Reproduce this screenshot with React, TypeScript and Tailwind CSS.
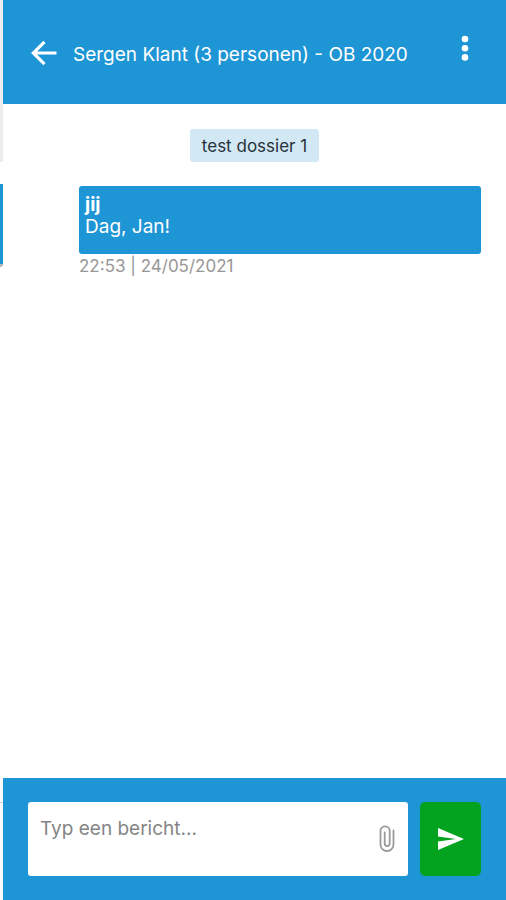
import { useState } from "react";

function BackIcon() {
  return (
    <svg viewBox="0 0 26 26" className="h-[26px] w-[26px]" fill="none" stroke="currentColor" strokeWidth="3.2" aria-hidden="true">
      <path d="M25.500 13H3M13.500 1.800L2.300 13l11.200 11.200" />
    </svg>
  );
}

function MoreIcon() {
  return (
    <svg viewBox="0 0 8 26" className="h-[26px] w-2" fill="currentColor" aria-hidden="true">
      <circle cx="4" cy="4" r="3.3" />
      <circle cx="4" cy="13.2" r="3.3" />
      <circle cx="4" cy="22.4" r="3.3" />
    </svg>
  );
}

function ClipIcon() {
  return (
    <svg viewBox="0 0 16 28" className="h-7 w-4" fill="none" stroke="currentColor" strokeWidth="1.8" strokeLinecap="round" aria-hidden="true">
      <path d="M14.500 5.500V19.500a6.500 6.500 0 0 1-13 0V6a4.600 4.600 0 0 1 9.200 0V18.500a2.500 2.500 0 0 1-5 0V7.500" />
    </svg>
  );
}

function SendIcon() {
  return (
    <svg viewBox="0 0 26 22" className="h-[22px] w-[26px]" fill="currentColor" aria-hidden="true">
      <path d="M0 0L26 11L0 22V13.500L18 11L0 8.500Z" />
    </svg>
  );
}

function SidebarEdge() {
  return (
    <div className="flex w-[3px] shrink-0 flex-col" aria-hidden="true">
      <div className="h-[162px] bg-[#ededed]" />
      <div className="mt-[22px] h-20 bg-[#1e95d4]" />
      <div className="h-[3px] rounded-br-sm bg-[#b5b5b5]" />
      <div className="flex-1" />
      <div className="h-[98px] border-t border-[#cccccc]" />
    </div>
  );
}

export default function App() {
  const [message, setMessage] = useState("");

  return (
    <div className="flex min-h-screen bg-white font-['Inter',sans-serif]">
      <SidebarEdge />
      <div className="flex min-w-0 flex-1 flex-col">
        <header className="flex h-[104px] items-center bg-[#1e95d4] pt-0.5 pr-[37px] pl-7 text-white">
          <button type="button" aria-label="Terug">
            <BackIcon />
          </button>
          <h1 className="ml-4 min-w-0 flex-1 truncate pt-1 text-[19px] leading-6">
            Sergen Klant (3 personen) - OB 2020
          </h1>
          <button type="button" aria-label="Meer opties" className="pb-2.5">
            <MoreIcon />
          </button>
        </header>

        <main className="flex flex-1 flex-col pt-[25px] pr-[25px] pl-[76px]">
          <div className="-ml-[51px] flex justify-center">
            <span className="rounded-[3px] bg-[#d2e8f4] px-3 pt-[5px] pb-[3px] text-[17px] leading-[25px] text-[#26323a]">
              test dossier 1
            </span>
          </div>
          <article className="mt-6">
            <div className="h-[68px] rounded-[3px] bg-[#1e95d4] px-1.5 pt-2 text-[19px] leading-[22px] text-white">
              <p className="font-bold">jij</p>
              <p>Dag, Jan!</p>
            </div>
            <time className="block text-[17px] leading-6 text-[#979797]">22:53 | 24/05/2021</time>
          </article>
        </main>

        <form
          className="flex gap-3 bg-[#1e95d4] px-[25px] py-6"
          onSubmit={(event) => {
            event.preventDefault();
            setMessage("");
          }}
        >
          <div className="flex h-[74px] min-w-0 flex-1 items-center rounded-[3px] bg-white pr-[13px]">
            <textarea
              aria-label="Bericht"
              placeholder="Typ een bericht..."
              value={message}
              onChange={(event) => setMessage(event.target.value)}
              className="h-full min-w-0 flex-1 resize-none px-3 pt-[15px] text-[19px] leading-6 text-[#333333] outline-none placeholder:text-[#858585]"
            />
            <button type="button" aria-label="Bijlage toevoegen" className="text-[#9a9a9a]">
              <ClipIcon />
            </button>
          </div>
          <button
            type="submit"
            aria-label="Versturen"
            className="flex h-[74px] w-[61px] items-center justify-center rounded-[5px] bg-[#03a31f] text-white"
          >
            <SendIcon />
          </button>
        </form>
      </div>
    </div>
  );
}
